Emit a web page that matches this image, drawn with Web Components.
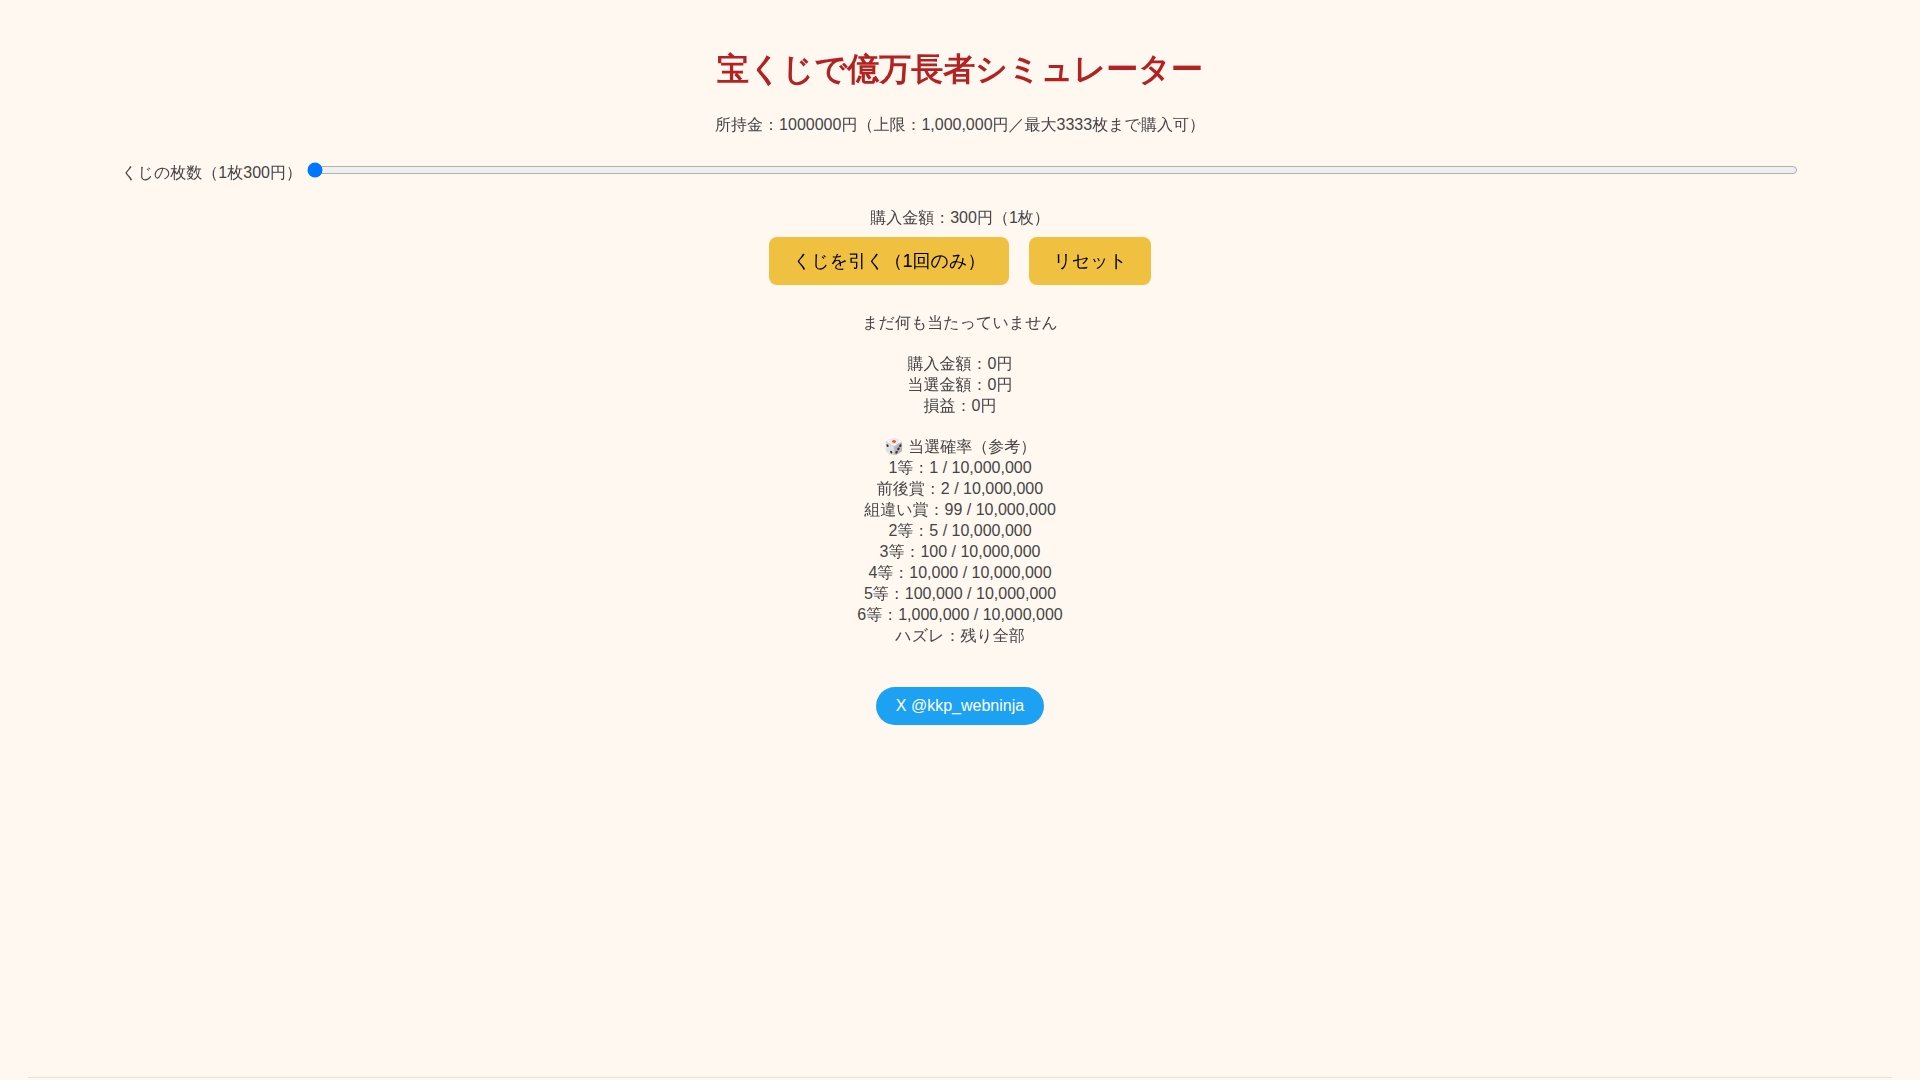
<!DOCTYPE html>
<html lang="ja">
<head>
<meta charset="utf-8">
<title>宝くじで億万長者シミュレーター</title>
<style>
body { margin: 0; background: #fff8f0; color: #444; font-family: "Liberation Sans", "WenQuanYi Zen Hei", "Noto Sans CJK JP", sans-serif; }
</style>
</head>
<body>
<lottery-simulator>
  <span slot="title">宝くじで億万長者シミュレーター</span>
  <a slot="social" href="#x">X @kkp_webninja</a>
</lottery-simulator>
<script>
class LotteryButton extends HTMLElement {
  constructor() {
    super();
    this.attachShadow({ mode: "open" }).innerHTML = `
      <style>
        :host { display: block; }
        button { font: inherit; font-size: 18px; line-height: 24px; padding: 12px 24px; border: 0; border-radius: 8px; background: #f0c040; color: #000; cursor: pointer; }
      </style>
      <button type="button"><slot></slot></button>`;
  }
}
customElements.define("lottery-button", LotteryButton);

class TicketSlider extends HTMLElement {
  constructor() {
    super();
    this.attachShadow({ mode: "open" }).innerHTML = `
      <style>
        :host { display: flex; align-items: flex-start; width: 90%; margin: 25px auto 24px; }
        label { padding-top: 2px; margin-right: 4px; white-space: nowrap; }
        input { flex: 1; min-width: 0; margin: 2px 1px; }
      </style>
      <label for="count">くじの枚数（1枚300円）</label>
      <input id="count" type="range" min="1" max="3333" value="1">`;
  }
}
customElements.define("ticket-slider", TicketSlider);

class OddsList extends HTMLElement {
  constructor() {
    super();
    this.attachShadow({ mode: "open" }).innerHTML = `
      <style>
        :host { display: block; margin-top: 20px; line-height: 21px; }
      </style>
      <div>🎲 当選確率（参考）</div>
      <div>1等：1 / 10,000,000</div>
      <div>前後賞：2 / 10,000,000</div>
      <div>組違い賞：99 / 10,000,000</div>
      <div>2等：5 / 10,000,000</div>
      <div>3等：100 / 10,000,000</div>
      <div>4等：10,000 / 10,000,000</div>
      <div>5等：100,000 / 10,000,000</div>
      <div>6等：1,000,000 / 10,000,000</div>
      <div>ハズレ：残り全部</div>`;
  }
}
customElements.define("odds-list", OddsList);

class LotterySimulator extends HTMLElement {
  constructor() {
    super();
    this.attachShadow({ mode: "open" }).innerHTML = `
      <style>
        :host { display: flex; flex-direction: column; box-sizing: border-box; min-height: 100vh; padding: 30px 28px 0; text-align: center; font-size: 16px; line-height: 21px; }
        main { flex: 1; padding-top: 16px; }
        h1 { margin: 0 0 20px; font-family: "WenQuanYi Zen Hei", "Noto Sans CJK JP", sans-serif; font-weight: 900; font-size: 32px; line-height: 48px; color: #b22222; }
        p { margin: 0; }
        .buttons { display: flex; justify-content: center; gap: 20px; margin: 9px 0 27px; }
        .totals { margin-top: 20px; }
        .social { margin-top: 41px; }
        ::slotted(a) { display: inline-block; line-height: 18px; padding: 10px 20px; border-radius: 20px; background: #1da1f2; color: #fff; text-decoration: none; }
        footer { border-top: 1px solid #f0e0d0; height: 2px; }
      </style>
      <main>
        <h1><slot name="title"></slot></h1>
        <p>所持金：1000000円（上限：1,000,000円／最大3333枚まで購入可）</p>
        <ticket-slider></ticket-slider>
        <p>購入金額：300円（1枚）</p>
        <div class="buttons">
          <lottery-button>くじを引く（1回のみ）</lottery-button>
          <lottery-button>リセット</lottery-button>
        </div>
        <p>まだ何も当たっていません</p>
        <div class="totals"><p>購入金額：0円</p><p>当選金額：0円</p><p>損益：0円</p></div>
        <odds-list></odds-list>
        <div class="social"><slot name="social"></slot></div>
      </main>
      <footer></footer>`;
  }
}
customElements.define("lottery-simulator", LotterySimulator);
</script>
</body>
</html>
